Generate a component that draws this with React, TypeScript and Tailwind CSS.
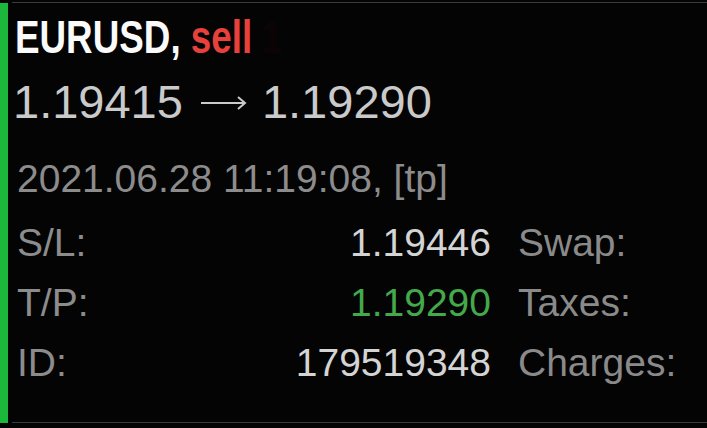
export default function App() {
  const rows = [
    { label: 'S/L:', value: '1.19446', valueClass: 'text-[#d4d4d4]', right: 'Swap:' },
    { label: 'T/P:', value: '1.19290', valueClass: 'text-[#43a94b]', right: 'Taxes:' },
    { label: 'ID:', value: '179519348', valueClass: 'text-[#d4d4d4]', right: 'Charges:' },
  ];

  return (
    <div
      className="w-[707px] h-[428px] bg-[#040404] flex pt-[2px] overflow-hidden"
      style={{ fontFamily: '"Liberation Sans", Arial, sans-serif' }}
    >
      {/* order side marker */}
      <div className="w-[8px] h-[420px] mt-[1px] bg-[#1bb83b] shrink-0" />

      <div className="flex-1 ml-[4px] h-[421px] border-t border-b border-[#3a3a40] pl-[5px]">
        {/* symbol + side */}
        <div className="mt-[11px] h-[46px] text-[46px] leading-[46px] font-bold whitespace-nowrap -ml-[2px]">
          <span className="inline-block origin-left scale-x-[0.8]">
            <span className="text-[#fafafa]">EURUSD, </span>
            <span className="text-[#e8413b]">sell</span>
            <span className="text-[#0c0404] ml-[12px]">1</span>
          </span>
        </div>

        {/* open -> close price */}
        <div className="mt-[18px] h-[47px] flex items-center text-[47px] leading-[47px] text-[#cacaca] whitespace-nowrap -ml-[4px]">
          <span>1.19415</span>
          <svg className="ml-[18px] mt-[2px] shrink-0" width="46" height="14" viewBox="0 0 46 14" fill="none">
            <path d="M0 7H44M37 1L44 7L37 13" stroke="#cacaca" strokeWidth="2" />
          </svg>
          <span className="ml-[15px]">1.19290</span>
        </div>

        {/* time */}
        <div className="mt-[34px] h-[39px] text-[39px] leading-[39px] text-[#8c8c8c] whitespace-nowrap">
          2021.06.28 11:19:08, [tp]
        </div>

        <div className="mt-[15px] flex flex-col">
          {rows.map((r) => (
            <div key={r.label} className="flex h-[60px] text-[39px] leading-[60px] whitespace-nowrap">
              <div className="w-[474px] flex justify-between">
                <span className="text-[#8c8c8c]">{r.label}</span>
                <span className={r.valueClass}>{r.value}</span>
              </div>
              <span className="ml-[27px] text-[#8a8a8a]">{r.right}</span>
            </div>
          ))}
        </div>
      </div>
    </div>
  );
}
